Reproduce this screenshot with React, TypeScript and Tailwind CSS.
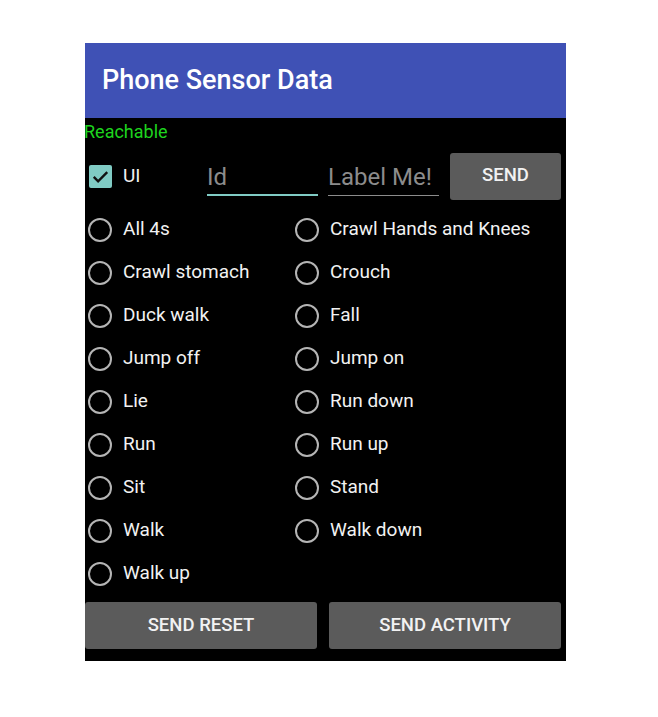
const left = ["All 4s", "Crawl stomach", "Duck walk", "Jump off", "Lie", "Run", "Sit", "Walk", "Walk up"];
const right = ["Crawl Hands and Knees", "Crouch", "Fall", "Jump on", "Run down", "Run up", "Stand", "Walk down"];

function Radio({ label }: { label: string }) {
  return (
    <div className="flex h-[43px] items-center">
      <span className="ml-[3px] box-border h-[24px] w-[24px] shrink-0 rounded-full border-2 border-[#b5b5b5]" />
      <span className="ml-[11px] whitespace-nowrap text-[19px] text-[#f2f2f2]">{label}</span>
    </div>
  );
}

export default function App() {
  // interleave both columns row by row
  const rows: (string | null)[] = [];
  left.forEach((l, i) => {
    rows.push(l);
    rows.push(right[i] ?? null);
  });

  return (
    <div className="min-h-[717px] bg-white pl-[85px] pt-[43px]" style={{ fontFamily: "Roboto, 'Noto Sans', sans-serif" }}>
      <div className="flex h-[618px] w-[481px] flex-col bg-black">
        {/* Toolbar */}
        <div className="flex h-[75px] items-center bg-[#3f51b5] pl-[17px]">
          <h1 className="text-[27px] font-medium text-white">Phone Sensor Data</h1>
        </div>

        <div className="flex h-[26px] items-center overflow-hidden">
          <span className="-ml-[1px] text-[18px] text-[#1ed31e]">Reachable</span>
        </div>

        {/* Input row */}
        <div className="flex h-[64px] items-center">
          <div className="ml-[4px] flex h-[23px] w-[23px] items-center justify-center rounded-[2px] bg-[#80cbc4]">
            <svg width="19" height="19" viewBox="0 0 24 24" fill="none">
              <path d="M3.5 12.5l5.5 5.5L20.5 6.5" stroke="#111" strokeWidth="3" />
            </svg>
          </div>
          <span className="ml-[11px] w-[84px] text-[19px] text-[#f2f2f2]">UI</span>
          <div className="flex h-[40px] w-[111px] flex-col justify-end border-b-2 border-[#80cbc4] pb-[5px]">
            <span className="text-[24px] leading-none text-[#8c8c8c]">Id</span>
          </div>
          <div className="ml-[10px] flex h-[40px] w-[111px] flex-col justify-end border-b border-[#8c8c8c] pb-[6px]">
            <span className="text-[24px] leading-none text-[#8c8c8c]">Label Me!</span>
          </div>
          <button className="ml-[11px] h-[47px] w-[111px] rounded-[3px] bg-[#5b5b5b] text-[18.5px] font-medium text-[#f2f2f2]">
            SEND
          </button>
        </div>

        {/* Activities */}
        <div className="grid grid-cols-[207px_1fr]">
          {rows.map((r, i) => (r ? <Radio key={i} label={r} /> : <div key={i} />))}
        </div>

        <div className="mt-[7px] flex gap-[12px] pr-[5px]">
          <button className="h-[47px] flex-1 rounded-[3px] bg-[#5b5b5b] text-[18.5px] font-medium text-[#f2f2f2]">
            SEND RESET
          </button>
          <button className="h-[47px] flex-1 rounded-[3px] bg-[#5b5b5b] text-[18.5px] font-medium text-[#f2f2f2]">
            SEND ACTIVITY
          </button>
        </div>
      </div>
    </div>
  );
}
